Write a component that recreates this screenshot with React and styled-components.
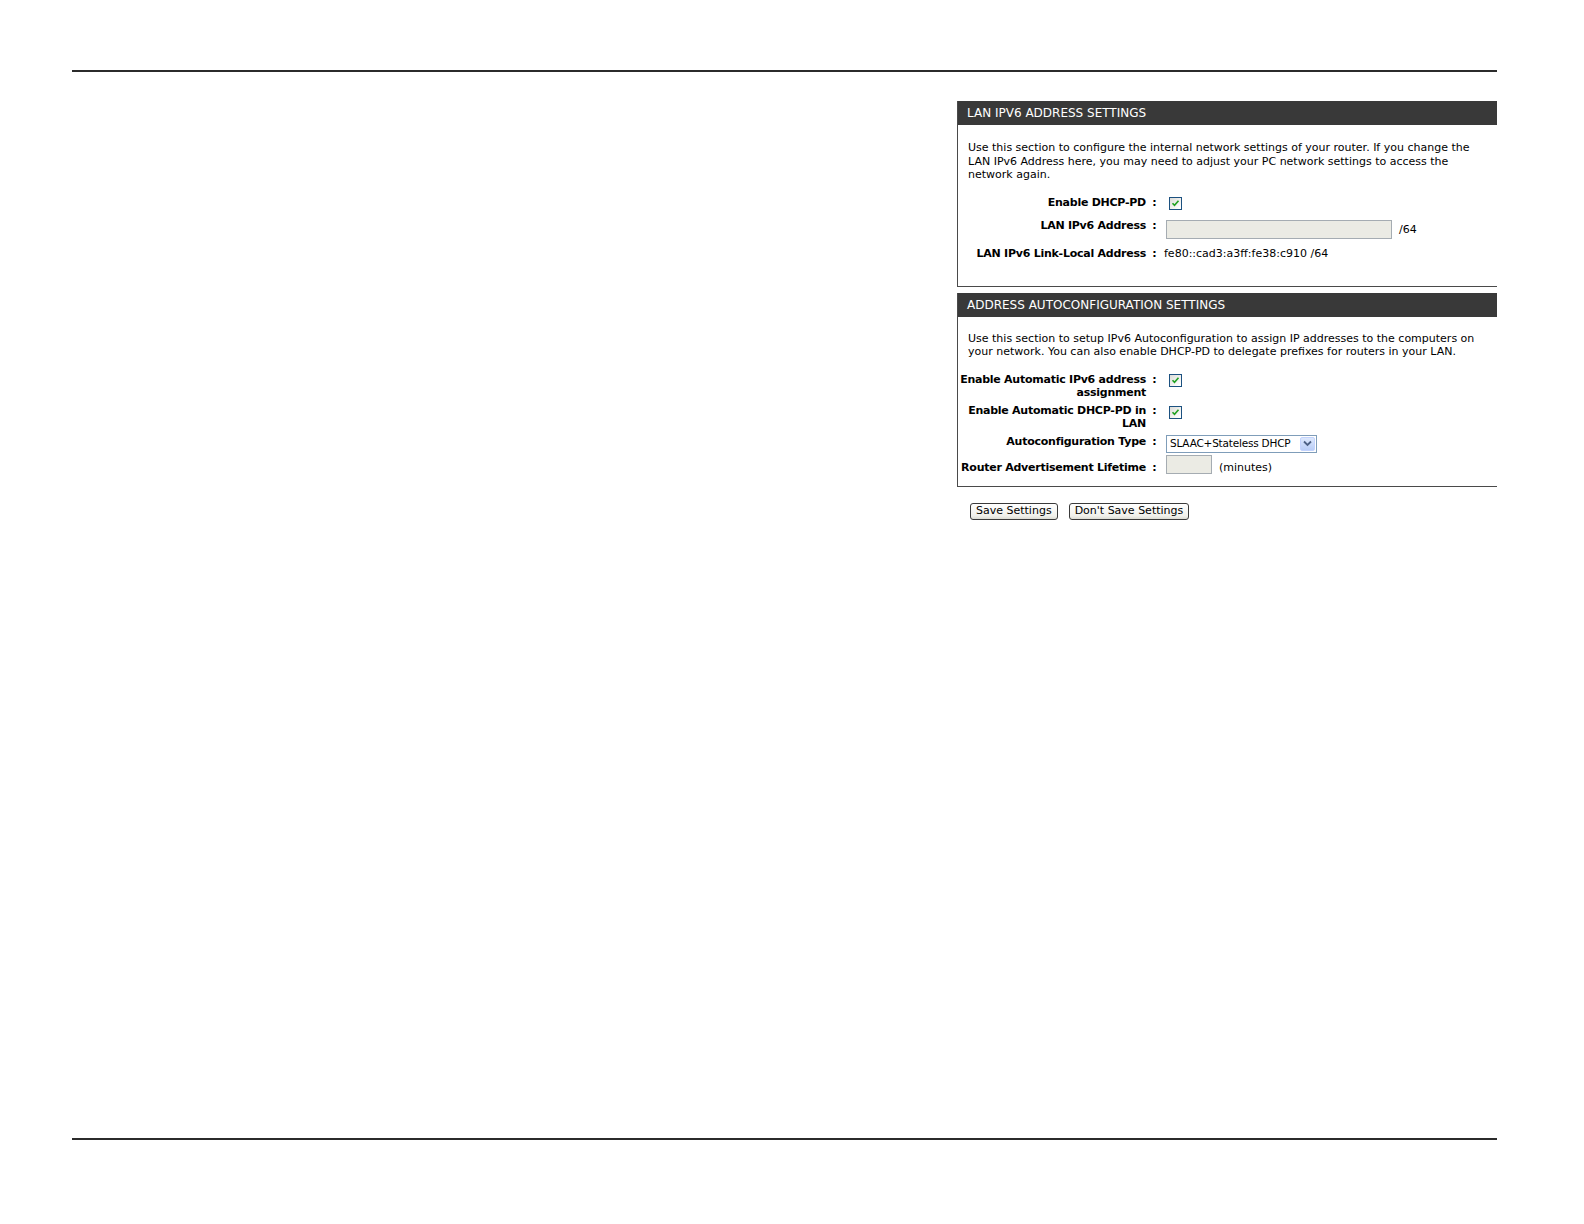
import React from "react";
import styled, { createGlobalStyle } from "styled-components";

const Global = createGlobalStyle`
  html, body { margin: 0; padding: 0; background: #fff; overflow: hidden; }
  body { font-family: "DejaVu Sans", "Liberation Sans", sans-serif; font-size: 11px; color: #000; }
`;

const Page = styled.div`
  height: 1224px;
  display: flex;
  flex-direction: column;
  box-sizing: border-box;
  padding: 70px 87px 0 72px;
`;

const Rule = styled.div`
  height: 2px;
  background: #2b2b2b;
  width: 100%;
`;

const BottomRule = styled(Rule)`
  margin-top: auto;
  margin-bottom: 84px;
`;

const Content = styled.div`
  display: flex;
  justify-content: flex-end;
  padding-top: 29px;
`;

const Column = styled.div`
  width: 540px;
  display: flex;
  flex-direction: column;
  gap: 6px;
`;

const Panel = styled.section`
  border-left: 1px solid #4a4a4a;
  border-bottom: 1px solid #4a4a4a;
`;

const Header = styled.h2`
  margin: 0;
  height: 24px;
  line-height: 25px;
  background: #393939;
  color: #fff;
  font-size: 12px;
  font-weight: normal;
  padding-left: 9px;
  text-transform: uppercase;
`;

const Body = styled.div`
  padding: ${(p) => p.$pad || "16px 0 26px 0"};
`;

const Desc = styled.p`
  margin: 0 10px;
  line-height: 13.5px;
`;

const Form = styled.div`
  display: grid;
  grid-template-columns: 188px 17px 1fr;
  margin-top: ${(p) => p.$top || "13px"};
`;

const Label = styled.div`
  font-weight: bold;
  text-align: right;
  line-height: 13px;
  letter-spacing: -0.25px;
  white-space: nowrap;
  min-height: ${(p) => p.$h || "0px"};
`;

const Colon = styled.div`
  font-weight: bold;
  text-align: center;
  line-height: 13px;
`;

const Value = styled.div`
  display: flex;
  align-items: center;
  gap: 7px;
  line-height: 13px;
  align-self: start;
  white-space: nowrap;
  padding-top: ${(p) => p.$pt || "0px"};
  padding-left: ${(p) => p.$pl || "0px"};
`;

const CheckBox = styled.span`
  display: inline-block;
  box-sizing: border-box;
  width: 13px;
  height: 13px;
  margin-left: 6px;
  border: 1px solid #1c5180;
  background: linear-gradient(135deg, #dcdcd7 0%, #ffffff 90%);
  position: relative;
  svg { position: absolute; left: 1px; top: 1px; }
`;

const TextBox = styled.span`
  display: inline-block;
  box-sizing: border-box;
  width: ${(p) => p.$w};
  height: 19px;
  border: 1px solid #a5acb2;
  background: #ebebe4;
  margin-left: 3px;
  margin-top: ${(p) => p.$mt || "0px"};
`;

const Select = styled.span`
  display: inline-flex;
  align-items: center;
  justify-content: space-between;
  box-sizing: border-box;
  width: 151px;
  height: 18px;
  margin-left: 3px;
  border: 1px solid #7f9db9;
  background: #fff;
  padding: 0 1px 0 3px;
  font-size: 10.5px;
  letter-spacing: -0.2px;
`;

const Arrow = styled.span`
  display: inline-flex;
  align-items: center;
  justify-content: center;
  width: 15px;
  height: 14px;
  border-radius: 2px;
  background: linear-gradient(180deg, #dde8fd 0%, #b9cdf7 100%);
  border: 1px solid #c3d3fd;
  box-sizing: border-box;
`;

const Buttons = styled.div`
  display: flex;
  gap: 11px;
  padding: 10px 0 0 13px;
`;

const Button = styled.button`
  font-family: inherit;
  font-size: 11px;
  height: 17px;
  padding: 0 5px;
  line-height: 14px;
  border: 1px solid #3a3a3a;
  border-radius: 3px;
  background: linear-gradient(180deg, #ffffff 0%, #f0f0ea 80%, #dcdcd4 100%);
  color: #000;
`;

function Check() {
  return (
    <CheckBox>
      <svg width="9" height="9" viewBox="0 0 9 9">
        <path d="M1.5 4.2 L3.5 6.3 L7.5 1.8" fill="none" stroke="#21a121" strokeWidth="1.6" />
      </svg>
    </CheckBox>
  );
}

export default function App() {
  return (
    <Page>
      <Global />
      <Rule />
      <Content>
        <Column>
          <Panel>
            <Header>LAN IPv6 Address Settings</Header>
            <Body>
              <Desc>
                Use this section to configure the internal network settings of your router. If you change the
                <br />
                LAN IPv6 Address here, you may need to adjust your PC network settings to access the
                <br />
                network again.
              </Desc>
              <Form $top="14px">
                <Label $h="23px">Enable DHCP-PD</Label>
                <Colon>:</Colon>
                <Value $pt="1px">
                  <Check />
                </Value>

                <Label $h="28px">LAN IPv6 Address</Label>
                <Colon>:</Colon>
                <Value $pt="1px">
                  <TextBox $w="226px" />
                  <span>/64</span>
                </Value>

                <Label>LAN IPv6 Link-Local Address</Label>
                <Colon>:</Colon>
                <Value $pl="1px">fe80::cad3:a3ff:fe38:c910 /64</Value>
              </Form>
            </Body>
          </Panel>

          <Panel>
            <Header>Address Autoconfiguration Settings</Header>
            <Body $pad="15px 0 6px 0">
              <Desc>
                Use this section to setup IPv6 Autoconfiguration to assign IP addresses to the computers on
                <br />
                your network. You can also enable DHCP-PD to delegate prefixes for routers in your LAN.
              </Desc>
              <Form $top="14px">
                <Label $h="31px">
                  Enable Automatic IPv6 address
                  <br />
                  assignment
                </Label>
                <Colon>:</Colon>
                <Value $pt="1px">
                  <Check />
                </Value>

                <Label $h="31px">
                  Enable Automatic DHCP-PD in
                  <br />
                  LAN
                </Label>
                <Colon>:</Colon>
                <Value $pt="2px">
                  <Check />
                </Value>

                <Label $h="26px">Autoconfiguration Type</Label>
                <Colon>:</Colon>
                <Value>
                  <Select>
                    <span>SLAAC+Stateless DHCP</span>
                    <Arrow>
                      <svg width="9" height="7" viewBox="0 0 9 7">
                        <path d="M1 1.5 L4.5 5 L8 1.5" fill="none" stroke="#4d6185" strokeWidth="1.8" />
                      </svg>
                    </Arrow>
                  </Select>
                </Value>

                <Label $h="19px">Router Advertisement Lifetime</Label>
                <Colon>:</Colon>
                <Value>
                  <TextBox $w="46px" $mt="-6px" />
                  <span>(minutes)</span>
                </Value>
              </Form>
            </Body>
          </Panel>

          <Buttons>
            <Button>Save Settings</Button>
            <Button>Don't Save Settings</Button>
          </Buttons>
        </Column>
      </Content>
      <BottomRule />
    </Page>
  );
}
